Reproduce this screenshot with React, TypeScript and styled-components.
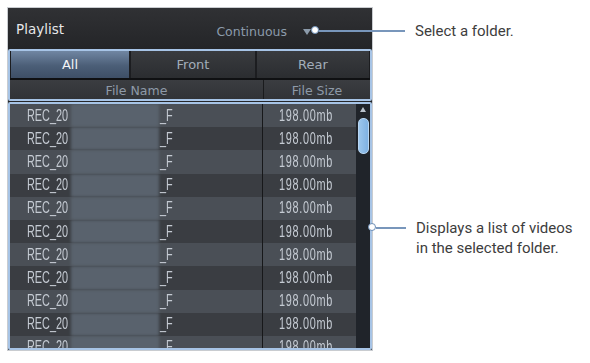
import React from "react";
import styled, { createGlobalStyle } from "styled-components";

const Global = createGlobalStyle`
  html, body { margin: 0; padding: 0; background: #ffffff; }
  body { font-family: "Roboto", "Liberation Sans", sans-serif; }
`;

const Page = styled.div`
  position: relative;
  width: 590px;
  height: 363px;
  padding: 7px 0 0 7px;
  box-sizing: border-box;
  display: flex;
`;

const Panel = styled.div`
  width: 366px;
  height: 344px;
  box-sizing: border-box;
  border: 1px solid #c9ccd0;
  background: #26272a;
  display: flex;
  flex-direction: column;
`;

const Header = styled.div`
  height: 41px;
  flex-shrink: 0;
  display: flex;
  align-items: center;
  padding: 0 8px;
  background: linear-gradient(#303134, #242528);
  font-family: "DejaVu Sans", "Liberation Sans", sans-serif;
`;

const Title = styled.div`
  color: #e6e7e9;
  font-size: 13.5px;
  flex: 1;
`;

const Mode = styled.div`
  color: #8c9bab;
  font-size: 12.5px;
  display: flex;
  align-items: center;
  gap: 16px;
  margin-right: 53px;
  padding-top: 6px;
`;

const Arrow = styled.span`
  width: 0;
  height: 0;
  border-left: 4px solid transparent;
  border-right: 4px solid transparent;
  border-top: 6px solid #8c9bab;
`;

const BlueBox = styled.div<{ $h: number }>`
  height: ${(p) => p.$h}px;
  flex-shrink: 0;
  box-sizing: border-box;
  border: 2px solid #a7c4e6;
  border-radius: 2px;
  background: #1c1d20;
  overflow: hidden;
  display: flex;
  flex-direction: column;
`;

const Tabs = styled.div`
  display: grid;
  grid-template-columns: 118px 124px 1fr;
  gap: 2px;
  height: 27px;
  padding: 0 1px;
  border-bottom: 2px solid #0f1012;
  font-family: "DejaVu Sans", "Liberation Sans", sans-serif;
`;

const Tab = styled.div<{ $active?: boolean }>`
  display: flex;
  align-items: center;
  justify-content: center;
  font-size: 13px;
  color: ${(p) => (p.$active ? "#f2f4f7" : "#a2adb9")};
  background: ${(p) =>
    p.$active
      ? "linear-gradient(#7086a2, #4b5e77 55%, #3e4f66)"
      : "linear-gradient(#393b3f, #2b2d30)"};
`;

const ColHead = styled.div`
  display: grid;
  grid-template-columns: 253px 1fr;
  height: 19px;
  background: linear-gradient(#3b3d41, #313337);
  font-family: "DejaVu Sans", "Liberation Sans", sans-serif;
  font-size: 12.5px;
  color: #8e9aa8;
`;

const HeadCell = styled.div<{ $sep?: boolean }>`
  display: flex;
  align-items: center;
  justify-content: center;
  padding-top: 1px;
  border-left: ${(p) => (p.$sep ? "1px solid #1a1b1d" : "none")};
`;

const Spacer = styled.div`
  height: 1px;
  flex-shrink: 0;
`;

const ListWrap = styled.div`
  flex: 1;
  display: flex;
  position: relative;
`;

const Rows = styled.div`
  flex: 1;
  display: flex;
  flex-direction: column;
`;

const Row = styled.div<{ $dark: boolean }>`
  height: 23.2px;
  flex-shrink: 0;
  display: grid;
  grid-template-columns: 253px 1fr;
  background: ${(p) => (p.$dark ? "#3a3d42" : "#4a4f56")};
  font-family: "Liberation Sans", "Arial", sans-serif;
  font-size: 16px;
  color: #c5cbd3;
`;

const NameCell = styled.div`
  display: flex;
  align-items: center;
  padding-left: 17px;
  border-right: 1px solid #17181a;
  overflow: hidden;
`;

const Narrow = styled.span<{ $w: number; $origin?: string; $spacing?: number }>`
  display: inline-block;
  width: ${(p) => p.$w}px;
  white-space: nowrap;
  letter-spacing: ${(p) => p.$spacing || 0}px;
  transform: scaleX(0.68);
  transform-origin: ${(p) => p.$origin || "left"};
`;

const Blur = styled.span`
  width: 88px;
  height: 100%;
  margin: 0 1px 0 1px;
  background: #59626d;
  filter: blur(1.5px);
`;

const SizeCell = styled.div`
  display: flex;
  align-items: center;
  justify-content: center;
  padding-right: 2px;
`;

const Scroll = styled.div`
  width: 14px;
  background: #20242a;
  position: relative;
  display: flex;
  flex-direction: column;
  align-items: center;
`;

const ScrollUp = styled.span`
  margin-top: 3px;
  width: 0;
  height: 0;
  border-left: 3px solid transparent;
  border-right: 3px solid transparent;
  border-bottom: 5px solid #b9c2cc;
`;

const Thumb = styled.div`
  margin-top: 6px;
  width: 9px;
  height: 34px;
  border-radius: 5px;
  background: linear-gradient(90deg, #9cc6ec, #7fb1e2);
  border: 1px solid #b8d6f2;
`;

const ScrollDown = styled.span`
  position: absolute;
  bottom: 1px;
  width: 0;
  height: 0;
  border-left: 3px solid transparent;
  border-right: 3px solid transparent;
  border-top: 4px solid #8a96a4;
`;

const Callout = styled.div<{ $top: number; $left: number }>`
  position: absolute;
  top: ${(p) => p.$top}px;
  left: ${(p) => p.$left}px;
  display: flex;
  align-items: flex-start;
`;

const Dot = styled.span`
  margin-top: 5px;
  width: 6px;
  height: 6px;
  border-radius: 50%;
  background: #ffffff;
  border: 1.5px solid #6d8fb8;
  box-sizing: content-box;
  flex-shrink: 0;
`;

const Line = styled.span<{ $w: number }>`
  margin-top: 9px;
  width: ${(p) => p.$w}px;
  height: 2px;
  background: #7896bb;
`;

const Note = styled.div`
  margin-left: 10px;
  font-family: "Roboto", "Liberation Sans", sans-serif;
  font-size: 15px;
  line-height: 20px;
  color: #3d3d3d;
`;

const rows = Array.from({ length: 11 }, (_, i) => i);

export default function App() {
  return (
    <>
      <Global />
      <Page>
        <Panel>
          <Header>
            <Title>Playlist</Title>
            <Mode>
              Continuous <Arrow />
            </Mode>
          </Header>
          <BlueBox $h={52}>
            <Tabs>
              <Tab $active>All</Tab>
              <Tab>Front</Tab>
              <Tab>Rear</Tab>
            </Tabs>
            <ColHead>
              <HeadCell>File Name</HeadCell>
              <HeadCell $sep>File Size</HeadCell>
            </ColHead>
          </BlueBox>
          <Spacer />
          <BlueBox $h={248}>
            <ListWrap>
              <Rows>
                {rows.map((i) => (
                  <Row key={i} $dark={i % 2 === 1}>
                    <NameCell>
                      <Narrow $w={43}>REC_20</Narrow>
                      <Blur />
                      <Narrow $w={20}>_F</Narrow>
                    </NameCell>
                    <SizeCell>
                      <Narrow $w={88} $origin="center" $spacing={1}>
                        198.00mb
                      </Narrow>
                    </SizeCell>
                  </Row>
                ))}
              </Rows>
              <Scroll>
                <ScrollUp />
                <Thumb />
                <ScrollDown />
              </Scroll>
            </ListWrap>
          </BlueBox>
        </Panel>
        <Callout $top={21} $left={311}>
          <Dot />
          <Line $w={86} />
          <Note>Select a folder.</Note>
        </Callout>
        <Callout $top={218} $left={368}>
          <Dot />
          <Line $w={30} />
          <Note>
            Displays a list of videos
            <br />
            in the selected folder.
          </Note>
        </Callout>
      </Page>
    </>
  );
}
